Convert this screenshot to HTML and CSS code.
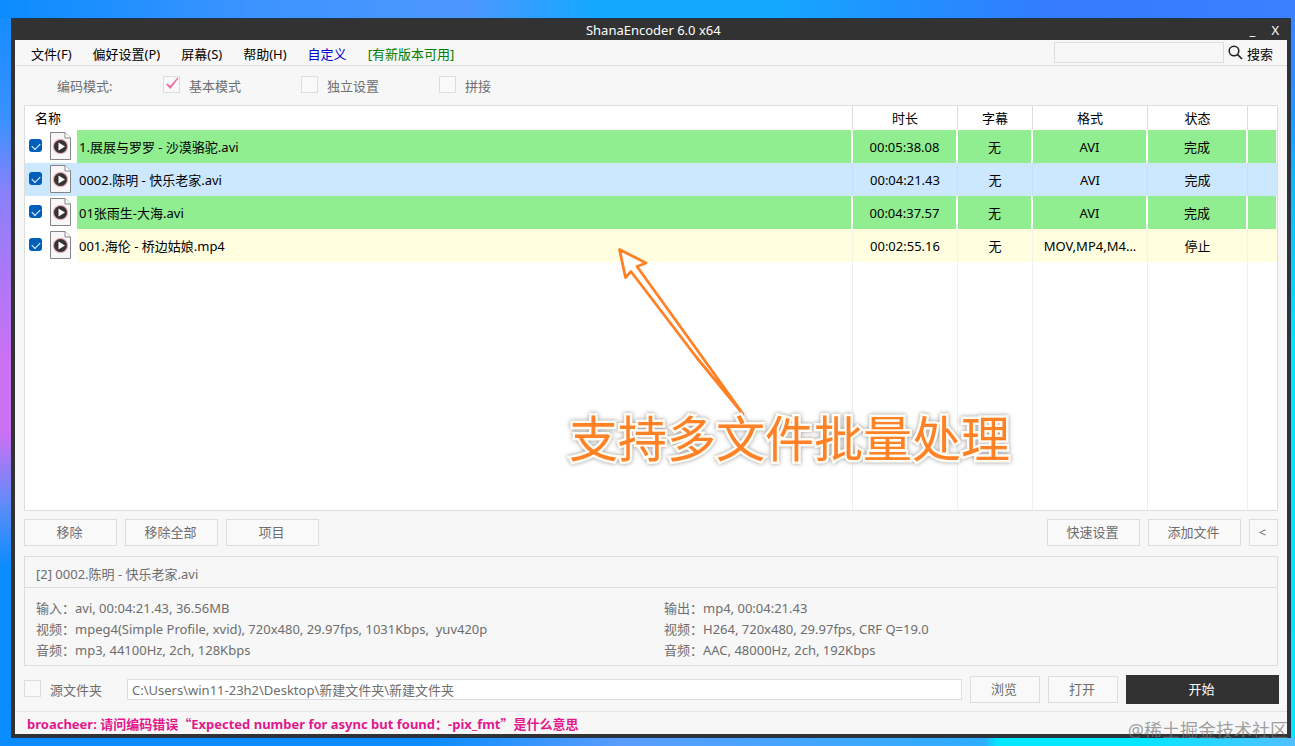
FILE: index.html
```html
<!DOCTYPE html>
<html lang="zh-CN">
<head>
    <meta charset="UTF-8">
    <meta name="viewport" content="width=device-width, initial-scale=1.0">
    <title>ShanaEncoder 6.0 x64</title>
    <link rel="stylesheet" href="styles.css">
</head>
<body>
    <svg class="symbols" aria-hidden="true">
        <defs>
            <radialGradient id="ring">
                <stop offset="0.68" stop-color="#3b3637"/>
                <stop offset="0.76" stop-color="#8a5a72"/>
                <stop offset="0.86" stop-color="#e8a98c"/>
                <stop offset="1" stop-color="#c9a0e0" stop-opacity="0.2"/>
            </radialGradient>
            <symbol id="media" viewBox="0 0 21 28">
                <path d="M0.5 0.5H15L20.5 6V27.5H0.5Z" fill="#f8f6f9" stroke="#858585"/>
                <path d="M15 0.5V6H20.5" fill="#fff" stroke="#858585"/>
                <circle cx="10.500" cy="14.500" r="8" fill="url(#ring)"/>
                <circle cx="10.500" cy="14.500" r="6.300" fill="#353334"/>
                <path d="M8.500 10.500L15 14.500L8.500 18.500Z" fill="#fff"/>
            </symbol>
        </defs>
    </svg>
    <main class="window">
        <header class="titlebar">
            <span class="title">ShanaEncoder 6.0 x64</span>
            <div class="window-buttons">
                <button type="button" aria-label="最小化">_</button>
                <button type="button" aria-label="关闭">X</button>
            </div>
        </header>
        <nav class="menu">
            <a href="#">文件(F)</a>
            <a href="#">偏好设置(P)</a>
            <a href="#">屏幕(S)</a>
            <a href="#">帮助(H)</a>
            <a href="#" class="custom">自定义</a>
            <a href="#" class="update">[有新版本可用]</a>
            <form class="search">
                <input type="text" aria-label="搜索">
                <button type="submit">
                    <svg width="15" height="15" viewBox="0 0 15 15" aria-hidden="true">
                        <circle cx="6" cy="6" r="4.800" fill="none" stroke="#222" stroke-width="1.500"/>
                        <path d="M9.500 9.500L14 14" stroke="#222" stroke-width="1.700"/>
                    </svg>
                    搜索
                </button>
            </form>
        </nav>
        <div class="modes">
            <span class="modes-title">编码模式:</span>
            <label class="mode"><input type="checkbox" class="check" checked>基本模式</label>
            <label class="mode"><input type="checkbox" class="check">独立设置</label>
            <label class="mode"><input type="checkbox" class="check">拼接</label>
        </div>
        <div class="list">
            <table>
                <colgroup>
                    <col class="col-check">
                    <col>
                    <col class="col-time">
                    <col class="col-sub">
                    <col class="col-format">
                    <col class="col-state">
                    <col class="col-end">
                </colgroup>
                <thead>
                    <tr>
                        <th colspan="2" class="name">名称</th>
                        <th>时长</th>
                        <th>字幕</th>
                        <th>格式</th>
                        <th>状态</th>
                        <th></th>
                    </tr>
                </thead>
                <tbody>
                    <tr class="done">
                        <td class="pick"><div><input type="checkbox" class="tick" aria-label="1.展展与罗罗 - 沙漠骆驼.avi" checked><svg width="21" height="28"><use href="#media"/></svg></div></td>
                        <td class="name">1.展展与罗罗 - 沙漠骆驼.avi</td>
                        <td>00:05:38.08</td>
                        <td>无</td>
                        <td>AVI</td>
                        <td>完成</td>
                        <td></td>
                    </tr>
                    <tr class="selected">
                        <td class="pick"><div><input type="checkbox" class="tick" aria-label="0002.陈明 - 快乐老家.avi" checked><svg width="21" height="28"><use href="#media"/></svg></div></td>
                        <td class="name">0002.陈明 - 快乐老家.avi</td>
                        <td>00:04:21.43</td>
                        <td>无</td>
                        <td>AVI</td>
                        <td>完成</td>
                        <td></td>
                    </tr>
                    <tr class="done">
                        <td class="pick"><div><input type="checkbox" class="tick" aria-label="01张雨生-大海.avi" checked><svg width="21" height="28"><use href="#media"/></svg></div></td>
                        <td class="name">01张雨生-大海.avi</td>
                        <td>00:04:37.57</td>
                        <td>无</td>
                        <td>AVI</td>
                        <td>完成</td>
                        <td></td>
                    </tr>
                    <tr class="stopped">
                        <td class="pick"><div><input type="checkbox" class="tick" aria-label="001.海伦 - 桥边姑娘.mp4" checked><svg width="21" height="28"><use href="#media"/></svg></div></td>
                        <td class="name">001.海伦 - 桥边姑娘.mp4</td>
                        <td>00:02:55.16</td>
                        <td>无</td>
                        <td>MOV,MP4,M4...</td>
                        <td>停止</td>
                        <td></td>
                    </tr>
                    <tr class="rest">
                        <td class="pick"></td><td></td><td></td><td></td><td></td><td></td><td></td>
                    </tr>
                </tbody>
            </table>
            <svg class="arrow" width="132" height="172" viewBox="0 0 132 172" aria-hidden="true">
                <path d="M4.500 3.500L31 17L22 20.500L85 108L128 168L82 112L16 25.500L10.500 31.500Z" fill="#fff" stroke="#ff8126" stroke-width="2.800" stroke-linejoin="round"/>
            </svg>
            <div class="note">支持多文件批量处理</div>
        </div>
        <div class="actions">
            <button type="button" class="btn">移除</button>
            <button type="button" class="btn">移除全部</button>
            <button type="button" class="btn">项目</button>
            <button type="button" class="btn push">快速设置</button>
            <button type="button" class="btn">添加文件</button>
            <button type="button" class="btn fold">&lt;</button>
        </div>
        <section class="info">
            <div class="info-title">[2] 0002.陈明 - 快乐老家.avi</div>
            <div class="info-content">
                <div>
                    <p>输入：avi, 00:04:21.43, 36.56MB</p>
                    <p>视频：mpeg4(Simple Profile, xvid), 720x480, 29.97fps, 1031Kbps,&nbsp; yuv420p</p>
                    <p>音频：mp3, 44100Hz, 2ch, 128Kbps</p>
                </div>
                <div>
                    <p>输出：mp4, 00:04:21.43</p>
                    <p>视频：H264, 720x480, 29.97fps, CRF Q=19.0</p>
                    <p>音频：AAC, 48000Hz, 2ch, 192Kbps</p>
                </div>
            </div>
        </section>
        <div class="output">
            <label class="source"><input type="checkbox" class="check">源文件夹</label>
            <input type="text" class="path" aria-label="输出路径" value="C:\Users\win11-23h2\Desktop\新建文件夹\新建文件夹">
            <button type="button" class="btn small">浏览</button>
            <button type="button" class="btn small">打开</button>
            <button type="button" class="start">开始</button>
        </div>
        <footer class="status">
            <a href="#">broacheer: 请问编码错误<span class="quote">“</span>Expected number for async but found：-pix_fmt<span class="quote">”</span>是什么意思</a>
        </footer>
    </main>
    <div class="watermark">@稀土掘金技术社区</div>
</body>
</html>
```
FILE: styles.css
```css
* {
    box-sizing: border-box;
}

body, button, input {
    font-family: 'Noto Sans', 'Noto Sans CJK SC', sans-serif;
    font-size: 13px;
    line-height: 20px;
}

body {
    margin: 0;
    min-height: 100vh;
    padding: 18px 4px 8px 11px;
    display: flex;
    position: relative;
    background:
        linear-gradient(90deg, #0a8cff, #3d94ff 20%, #4d97ff 36%, #14a8ff 46%, #14a8ff 60%, #2190ff 70%, #357aff 82%, #3a80ff) top / 100% 18px no-repeat,
        linear-gradient(90deg, #0a8cff 33%, #5a9dff 48%, #2eadff 76%, #05e6ff 77%, #05e6ff 88%, #50c0ff) bottom / 100% 8px no-repeat,
        linear-gradient(#0f8cff, #3a90ff 16%, #8a80fa 26%, #cc70f5 48%, #cc70f5 58%, #5b8cf8 68%, #0a8cff 76%) left / 11px 100% no-repeat,
        linear-gradient(#3a80ff, #2196ff 15%, #12b8ff 25%, #05e0ff 45%, #05e6ff);
}

a {
    color: inherit;
    text-decoration: none;
}

button {
    border: 0;
    padding: 0;
    background: none;
}

.symbols {
    position: absolute;
    width: 0;
    height: 0;
}

.window {
    flex: 1;
    display: flex;
    flex-direction: column;
    min-width: 0;
    background-color: #f7f7f7;
    border: 4px solid #323232;
    border-top: 0;
    outline: 1px solid #1d3550;
    outline-offset: -1px;
}

.titlebar {
    display: flex;
    align-items: center;
    height: 22px;
    padding-top: 2px;
    background-color: #323232;
    color: #fff;
}

.title {
    flex: 1;
    padding-left: 42px;
    text-align: center;
}

.window-buttons {
    display: flex;
    gap: 16px;
    padding-right: 8px;
}

.window-buttons button {
    color: #fff;
}

.menu {
    display: flex;
    align-items: center;
    gap: 21px;
    height: 26px;
    padding: 2px 14px 0 16px;
    border-bottom: 1px solid #e0e0e0;
    color: #000;
}

.custom {
    color: #00c;
}

.update {
    color: #008000;
}

.search {
    display: flex;
    align-items: center;
    gap: 4px;
    margin-left: auto;
}

.search input {
    width: 170px;
    height: 21px;
    margin-bottom: 2px;
    border: 1px solid #ddd;
    background-color: #f7f7f7;
}

.search button {
    display: flex;
    align-items: center;
    gap: 4px;
    color: #000;
}

.search svg {
    margin-bottom: 2px;
}

.modes {
    display: flex;
    align-items: center;
    height: 39px;
    padding-left: 42px;
    color: #6d6d6d;
}

.modes-title {
    width: 106px;
}

.mode {
    display: flex;
    align-items: center;
    gap: 9px;
    width: 138px;
}

.check {
    appearance: none;
    width: 17px;
    height: 17px;
    margin: 0 0 3px;
    border: 1px solid #ddd;
    background-color: #f9f9f9;
}

.check:checked::before {
    content: '';
    display: block;
    width: 15px;
    height: 15px;
    background-color: #f06aa8;
    clip-path: polygon(22% 46%, 42% 62%, 90% 6%, 98% 10%, 43% 84%, 14% 54%);
}

.list {
    flex: 1;
    display: flex;
    position: relative;
    margin: 0 9px;
    border: 1px solid #ddd;
    background-color: #fff;
}

table {
    width: 100%;
    table-layout: fixed;
    border-spacing: 0;
    color: #000;
}

.col-check {
    width: 52px;
}

.col-time {
    width: 105px;
}

.col-sub {
    width: 75px;
}

.col-format {
    width: 115px;
}

.col-state {
    width: 100px;
}

.col-end {
    width: 29px;
}

th, td {
    padding: 0;
    border-right: 1px solid #eee;
    text-align: center;
    white-space: nowrap;
}

th {
    height: 24px;
    border-color: #ddd;
    font-weight: normal;
}

td {
    height: 33px;
}

.rest td {
    height: auto;
}

th:last-child, td:last-child, td.pick {
    border-right: 0;
}

th.name {
    padding-left: 10px;
    text-align: left;
}

td.name {
    padding-left: 2px;
    text-align: left;
}

.pick div {
    display: flex;
    align-items: center;
    gap: 8px;
    padding: 0 0 2px 4px;
}

.done td:not(.pick) {
    background-color: #90ee90;
    border-right: 2px solid #fff;
}

.done td:last-child:not(.pick) {
    border-right-width: 1px;
}

.selected td {
    background-color: #cce8ff;
    border-color: #c2e0fa;
}

.stopped td:not(.pick) {
    background-color: #ffffe0;
    border-color: #f4f4e8;
}

.tick {
    appearance: none;
    width: 13px;
    height: 13px;
    margin: 0;
    border-radius: 3px;
    background-color: #005fb8;
}

.tick:checked::before {
    content: '';
    display: block;
    width: 7px;
    height: 4px;
    margin: 4px 3px;
    border-left: 1px solid #fff;
    border-bottom: 1px solid #fff;
    transform: rotate(-45deg);
}

.arrow {
    position: absolute;
    left: 590px;
    top: 140px;
}

.note {
    position: absolute;
    left: 544px;
    top: 302px;
    font-size: 49px;
    line-height: 60px;
    white-space: nowrap;
    color: #ff8126;
    -webkit-text-stroke: 5px #fffaf2;
    paint-order: stroke fill;
    filter: drop-shadow(0 0 2px #999);
}

.actions {
    display: flex;
    gap: 8px;
    padding: 8px 9px 10px;
}

.btn {
    width: 93px;
    height: 27px;
    padding: 0 2px 2px 0;
    border: 1px solid #ddd;
    background-color: #f9f9f9;
    color: #6d6d6d;
}

.push {
    margin-left: auto;
}

.fold {
    width: 29px;
}

.small {
    width: 70px;
}

.info {
    margin: 0 9px;
    border: 1px solid #ddd;
    color: #6d6d6d;
}

.info-title {
    padding: 7px 11px 3px;
    border-bottom: 1px solid #ddd;
}

.info-content {
    display: grid;
    grid-template-columns: 1fr 1fr;
    column-gap: 26px;
    padding: 10px 11px 4px;
}

.info-content p {
    margin: 0;
    line-height: 21px;
}

.output {
    display: flex;
    align-items: center;
    gap: 8px;
    padding: 9px 8px 7px 9px;
    color: #6d6d6d;
}

.source {
    display: flex;
    align-items: center;
    gap: 9px;
    width: 95px;
}

.path {
    flex: 1;
    min-width: 0;
    height: 21px;
    padding: 0 4px;
    border: 1px solid #ddd;
    background-color: #fff;
    color: #6d6d6d;
}

.start {
    width: 153px;
    height: 29px;
    padding: 0 2px 2px 0;
    background-color: #323232;
    color: #fff;
}

.status {
    height: 23px;
    padding: 2px 12px 0;
    border-top: 1px solid #e4e4e4;
    color: #e3178e;
    font-weight: bold;
}

.quote {
    font-family: 'Noto Sans CJK SC', sans-serif;
}

.watermark {
    position: absolute;
    right: 7px;
    bottom: 4px;
    font-size: 18px;
    line-height: 24px;
    color: rgba(120, 120, 120, 0.7);
}
```
